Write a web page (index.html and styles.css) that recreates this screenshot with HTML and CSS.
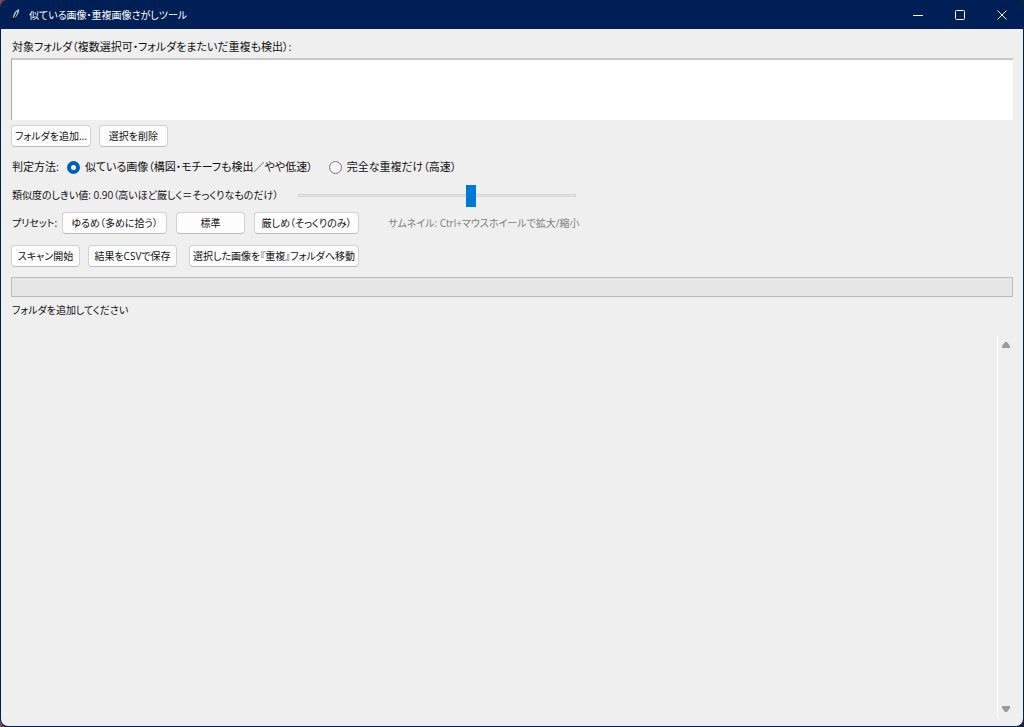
FILE: index.html
```
<!DOCTYPE html>
<html lang="ja">
<head>
  <meta charset="UTF-8" />
  <meta name="viewport" content="width=device-width, initial-scale=1" />
  <title>似ている画像・重複画像さがしツール</title>
  <link rel="stylesheet" href="styles.css">
</head>
<body>

  <div class="window">
    <!-- タイトルバー -->
    <header class="titlebar">
      <svg class="app-icon" viewBox="0 0 10 14" aria-hidden="true">
        <path d="M1 13 L2 7 C3 4 5 2 8 1 C10 4 7 9 4 11 Z" fill="#0a1420" />
        <path d="M2 10 C2 5 5 2 8 1 C9 4 6 8 4 10 Z" fill="#8fc4dc" />
        <path d="M2 13 L6 4" stroke="#06101c" stroke-width="1" />
      </svg>
      <h1>似ている画像・重複画像さがしツール</h1>
      <div class="window-buttons">
        <button type="button" aria-label="最小化">
          <svg viewBox="0 0 10 10"><path d="M0 5.500 H10" /></svg>
        </button>
        <button type="button" aria-label="最大化">
          <svg viewBox="0 0 10 10"><rect x="0.500" y="0.500" width="9" height="9" rx="1" /></svg>
        </button>
        <button type="button" aria-label="閉じる">
          <svg viewBox="0 0 10 10"><path d="M0.500 0.500 L9.500 9.500 M9.500 0.500 L0.500 9.500" /></svg>
        </button>
      </div>
    </header>

    <main>
      <!-- 対象フォルダ -->
      <label class="folder-label" for="folders">対象フォルダ（複数選択可・フォルダをまたいだ重複も検出）:</label>
      <select id="folders" class="folders" size="4" multiple></select>
      <div class="row folder-buttons">
        <button type="button" class="btn">フォルダを追加...</button>
        <button type="button" class="btn">選択を削除</button>
      </div>

      <!-- 判定方法 -->
      <div class="row method" role="radiogroup" aria-labelledby="methodLabel">
        <span id="methodLabel">判定方法:</span>
        <label class="radio"><input type="radio" name="method" value="similar" checked>似ている画像（構図・モチーフも検出／やや低速）</label>
        <label class="radio"><input type="radio" name="method" value="exact">完全な重複だけ（高速）</label>
      </div>

      <div class="row threshold">
        <label for="threshold">類似度のしきい値: <span id="thresholdValue">0.90</span>（高いほど厳しく＝そっくりなものだけ）</label>
        <input type="range" id="threshold" min="0.70" max="1.02" step="0.01" value="0.90">
      </div>

      <div class="row presets">
        <span>プリセット:</span>
        <button type="button" class="btn wide" data-value="0.80">ゆるめ（多めに拾う）</button>
        <button type="button" class="btn" data-value="0.90">標準</button>
        <button type="button" class="btn wide" data-value="0.96">厳しめ（そっくりのみ）</button>
        <span class="hint">サムネイル: Ctrl+マウスホイールで拡大/縮小</span>
      </div>

      <!-- 実行 -->
      <div class="row actions">
        <button type="button" class="btn">スキャン開始</button>
        <button type="button" class="btn">結果をCSVで保存</button>
        <button type="button" class="btn move">選択した画像を『重複』フォルダへ移動</button>
      </div>

      <div class="progress" role="progressbar" aria-label="進捗" aria-valuenow="0"></div>
      <p class="status">フォルダを追加してください</p>

      <!-- 結果一覧 -->
      <section class="results">
        <div class="result-list"></div>
        <div class="scrollbar">
          <button type="button" aria-label="上へ"><svg viewBox="0 0 8 6"><path d="M3 0 H5 L8 4 V6 H0 V4 Z" /></svg></button>
          <button type="button" aria-label="下へ"><svg viewBox="0 0 8 6"><path d="M3 6 H5 L8 2 V0 H0 V2 Z" /></svg></button>
        </div>
      </section>
    </main>
  </div>

  <script>
    const threshold = document.getElementById("threshold");
    const thresholdValue = document.getElementById("thresholdValue");

    function showThreshold() {
      thresholdValue.textContent = Number(threshold.value).toFixed(2);
    }

    threshold.addEventListener("input", showThreshold);

    document.querySelectorAll(".presets button").forEach((button) => {
      button.addEventListener("click", () => {
        threshold.value = button.dataset.value;
        showThreshold();
      });
    });
  </script>
</body>
</html>
```
FILE: styles.css
```
* {
  box-sizing: border-box;
}

body {
  margin: 0;
  background: linear-gradient(to right, #8a4a50, #1a2238 10px);
  color: #111;
  font-family: "Open Sans", "Noto Sans CJK JP", sans-serif;
  font-size: 10px;
  line-height: 16px;
  font-feature-settings: "palt";
}

button,
select,
input {
  font: inherit;
  font-feature-settings: inherit;
  color: inherit;
  margin: 0;
}

.window {
  min-height: 100vh;
  display: flex;
  flex-direction: column;
  padding: 0 1px 1px;
  background: #001f57;
  border-radius: 8px;
  overflow: hidden;
}

/* タイトルバー */
.titlebar {
  display: flex;
  align-items: center;
  height: 29px;
  padding-left: 10px;
  color: #fff;
}

.app-icon {
  width: 10px;
  height: 14px;
  margin-right: 8px;
}

.titlebar h1 {
  flex: 1;
  margin: 0;
  font-size: 10px;
  font-weight: 400;
}

.window-buttons {
  display: flex;
}

.window-buttons button {
  width: 42px;
  height: 28px;
  padding: 0;
  border: none;
  background: none;
}

.window-buttons svg {
  display: block;
  width: 10px;
  height: 10px;
  margin: 0 auto;
  fill: none;
  stroke: #fff;
}

main {
  flex: 1;
  display: flex;
  flex-direction: column;
  padding: 10px 10px 8px;
  background: #efefef;
  border-radius: 0 0 7px 7px;
}

.row {
  display: flex;
  align-items: center;
  white-space: nowrap;
}

.folder-label {
  margin-left: 1px;
  font-size: 11px;
}

/* フォルダ一覧 */
.folders {
  height: 62px;
  margin-top: 3px;
  border: 0 solid #c8c8c8;
  border-top-width: 2px;
  border-left: 1px solid #a8a8a8;
  border-radius: 0;
  background: #fff;
  outline: none;
}

.btn {
  min-width: 69px;
  height: 22px;
  padding: 0 3px;
  border: 1px solid #d2d2d2;
  border-bottom-color: #bcbcbc;
  border-radius: 4px;
  background: #fdfdfd;
  line-height: 18px;
}

.folder-buttons {
  gap: 8px;
  margin-top: 5px;
}

/* 判定方法 */
.method {
  height: 20px;
  margin: 10px 0 0 1px;
  gap: 8px;
  font-size: 11px;
}

.radio {
  display: flex;
  align-items: center;
  gap: 5px;
  margin-right: 8px;
}

.radio input {
  appearance: none;
  width: 13px;
  height: 13px;
  border: 1px solid #7a7a7a;
  border-radius: 50%;
  background: #f5f5f5;
}

.radio input:checked {
  border: 4px solid #005fb8;
  background: #fff;
}

/* しきい値 */
.threshold {
  height: 24px;
  margin: 6px 0 0 1px;
  gap: 20px;
}

.threshold input {
  appearance: none;
  width: 278px;
  height: 22px;
  background: none;
}

.threshold input::-webkit-slider-runnable-track {
  height: 3px;
  border: 1px solid #d6d6d6;
  background: #e6e6e6;
}

.threshold input::-webkit-slider-thumb {
  appearance: none;
  width: 10px;
  height: 22px;
  margin-top: -10px;
  background: #0078d7;
}

.presets {
  margin: 5px 0 0 1px;
  gap: 9px;
}

.presets span:first-child {
  margin-right: -4px;
}

.wide {
  min-width: 105px;
}

.hint {
  margin-left: 20px;
  color: #808080;
}

.actions {
  margin-top: 11px;
  gap: 8px;
}

.actions .btn + .btn {
  min-width: 89px;
}

.move {
  margin-left: 4px;
}

.progress {
  height: 20px;
  margin-top: 10px;
  border: 1px solid #bcbcbc;
  background: #e6e6e6;
}

.status {
  margin: 5px 0 0 1px;
}

/* 結果一覧 */
.results {
  flex: 1;
  display: flex;
  margin-top: 18px;
}

.result-list {
  flex: 1;
}

.scrollbar {
  display: flex;
  flex-direction: column;
  justify-content: space-between;
  width: 16px;
  border-left: 1px solid #fff;
}

.scrollbar button {
  height: 18px;
  padding: 0;
  border: none;
  background: none;
}

.scrollbar svg {
  display: block;
  width: 8px;
  height: 6px;
  margin: 0 auto;
  fill: #9b9b9b;
}
```
